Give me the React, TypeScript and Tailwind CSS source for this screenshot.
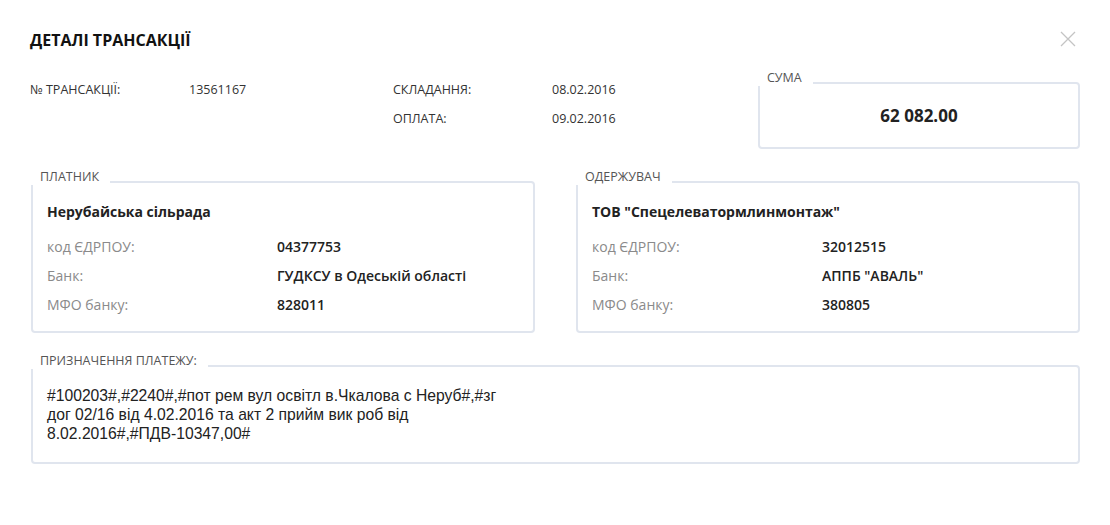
import type { ReactNode } from 'react';

function Box({
  label,
  className = '',
  children,
}: {
  label: string;
  className?: string;
  children: ReactNode;
}) {
  return (
    <div className={`relative rounded-[4px] border-2 border-[#e0e5ee] bg-white ${className}`}>
      <span className="absolute -left-[3px] -top-[14px] bg-white pl-[10px] pr-[11px] text-[12.5px] leading-[16px] text-[#555]">
        {label}
      </span>
      {children}
    </div>
  );
}

function PartyBox({
  label,
  name,
  code,
  bank,
  mfo,
}: {
  label: string;
  name: string;
  code: string;
  bank: string;
  mfo: string;
}) {
  const rows = [
    ['код ЄДРПОУ:', code],
    ['Банк:', bank],
    ['МФО банку:', mfo],
  ];
  return (
    <Box label={label} className="px-[14px] pb-[12px] pt-[19px]">
      <p className="mb-[10px] h-[20px] text-[14px] font-bold leading-[20px] text-[#222]">{name}</p>
      {rows.map(([k, v]) => (
        <div key={k} className="flex h-[29px] items-center text-[14px]">
          <span className="w-[230px] text-[#8a8a8a]">{k}</span>
          <span className="font-semibold text-[#222]">{v}</span>
        </div>
      ))}
    </Box>
  );
}

export default function App() {
  return (
    <div className="min-h-[525px] bg-white px-[30px] pt-[30px] font-['Open_Sans',sans-serif]">
      <div className="flex h-[20px] items-center justify-between">
        <h1 className="text-[16px] font-bold leading-[20px] text-[#111]">ДЕТАЛІ ТРАНСАКЦІЇ</h1>
        <button className="mr-[4px] mt-[-2px] text-[#c4c4c4]">
          <svg width="16" height="16" viewBox="0 0 16 16" fill="none" stroke="currentColor" strokeWidth="1.3">
            <path d="M1 1 L15 15 M15 1 L1 15" />
          </svg>
        </button>
      </div>

      <div className="mt-[26px] flex items-start">
        <div className="grid flex-1 grid-cols-[159px_204px_159px_1fr] text-[12.5px] text-[#333]">
          <div className="flex h-[29px] items-center">№ ТРАНСАКЦІЇ:</div>
          <div className="flex h-[29px] items-center">13561167</div>
          <div className="flex h-[29px] items-center">СКЛАДАННЯ:</div>
          <div className="flex h-[29px] items-center">08.02.2016</div>
          <div />
          <div />
          <div className="flex h-[29px] items-center">ОПЛАТА:</div>
          <div className="flex h-[29px] items-center">09.02.2016</div>
        </div>
        <Box label="СУМА" className="mt-[6px] flex h-[67px] w-[322px] items-center justify-center">
          <span className="text-[17px] font-bold text-[#222]">62 082.00</span>
        </Box>
      </div>

      <div className="mt-[32px] grid grid-cols-2 gap-[41px] pl-[1px]">
        <PartyBox
          label="ПЛАТНИК"
          name="Нерубайська сільрада"
          code="04377753"
          bank="ГУДКСУ в Одеській області"
          mfo="828011"
        />
        <PartyBox
          label="ОДЕРЖУВАЧ"
          name='ТОВ "Спецелеватормлинмонтаж"'
          code="32012515"
          bank='АППБ "АВАЛЬ"'
          mfo="380805"
        />
      </div>

      <div className="mt-[32px] pl-[1px]">
        <Box label="ПРИЗНАЧЕННЯ ПЛАТЕЖУ:" className="px-[14px] pb-[19px] pt-[19px]">
          <p className="font-['Liberation_Sans',Arial,sans-serif] text-[15.7px] leading-[19px] text-[#222]">
            #100203#,#2240#,#пот рем вул освітл в.Чкалова с Неруб#,#зг
            <br />
            дог 02/16 від 4.02.2016 та акт 2 прийм вик роб від
            <br />
            8.02.2016#,#ПДВ-10347,00#
          </p>
        </Box>
      </div>
    </div>
  );
}
